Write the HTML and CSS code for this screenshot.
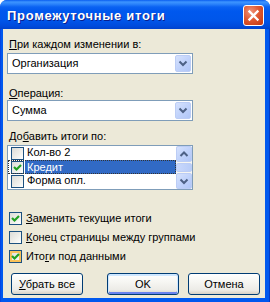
FILE: index.html
```html
<!DOCTYPE html>
<html lang="ru">
  <head>
    <meta charset="UTF-8" />
    <title>Промежуточные итоги</title>
    <link rel="stylesheet" href="styles.css">
  </head>
  <body>
    <div class="window">
      <div class="titlebar">
        <span class="title">Промежуточные итоги</span>
        <span class="close">
          <svg width="19" height="19" viewBox="0 0 19 19"><path d="M5.5 5.5 L13.5 13.5 M13.5 5.5 L5.5 13.5" stroke="#fff" stroke-width="2.4" stroke-linecap="square" fill="none"/></svg>
        </span>
      </div>
      <div class="frame">
        <div class="label label-first"><u>П</u>ри каждом изменении в:</div>
        <div class="combo combo-first">
          <span class="combo-text">Организация</span>
          <span class="arrow-btn"><svg width="14" height="15" viewBox="0 0 14 15"><polyline points="3.5,5.5 7,9 10.5,5.5" stroke="#4d6185" stroke-width="2" fill="none"/></svg></span>
        </div>
        <div class="label label-op"><u>О</u>перация:</div>
        <div class="combo">
          <span class="combo-text">Сумма</span>
          <span class="arrow-btn"><svg width="14" height="15" viewBox="0 0 14 15"><polyline points="3.5,5.5 7,9 10.5,5.5" stroke="#4d6185" stroke-width="2" fill="none"/></svg></span>
        </div>
        <div class="label label-add">До<u>б</u>авить итоги по:</div>
        <div class="listbox">
          <div class="items">
            <div class="item">
              <span class="cb"></span>
              <span class="item-text">Кол-во 2</span>
            </div>
            <div class="item focus">
              <span class="cb"><svg width="11" height="11" viewBox="0 0 11 11"><polyline points="2,5 4.5,7.5 9,3" stroke="#21a121" stroke-width="2.2" fill="none"/></svg></span>
              <span class="item-text selected">Кредит</span>
            </div>
            <div class="item">
              <span class="cb"></span>
              <span class="item-text">Форма опл.</span>
            </div>
          </div>
          <div class="scrollbar">
            <span class="arrow-btn sb-btn"><svg width="14" height="15" viewBox="0 0 14 15"><polyline points="3.5,9 7,5.5 10.5,9" stroke="#4d6185" stroke-width="2" fill="none"/></svg></span>
            <div class="track"><span class="thumb"></span></div>
            <span class="arrow-btn sb-btn"><svg width="14" height="15" viewBox="0 0 14 15"><polyline points="3.5,5.5 7,9 10.5,5.5" stroke="#4d6185" stroke-width="2" fill="none"/></svg></span>
          </div>
        </div>
        <div class="options">
          <div class="option">
            <span class="cb"><svg width="11" height="11" viewBox="0 0 11 11"><polyline points="2,5 4.5,7.5 9,3" stroke="#21a121" stroke-width="2.2" fill="none"/></svg></span>
            <span><u>З</u>аменить текущие итоги</span>
          </div>
          <div class="option">
            <span class="cb"></span>
            <span><u>К</u>онец страницы между группами</span>
          </div>
          <div class="option">
            <span class="cb hover"><svg width="11" height="11" viewBox="0 0 11 11"><polyline points="2,5 4.5,7.5 9,3" stroke="#21a121" stroke-width="2.2" fill="none"/></svg></span>
            <span>Ито<u>г</u>и под данными</span>
          </div>
        </div>
        <div class="buttons">
          <button class="btn"><span><u>У</u>брать все</span></button>
          <button class="btn btn-default">OK</button>
          <button class="btn">Отмена</button>
        </div>
      </div>
    </div>
  </body>
</html>
```

FILE: styles.css
```css
* {
  margin: 0;
  padding: 0;
  box-sizing: border-box;
}

body {
  width: 270px;
  height: 302px;
  overflow: hidden;
  font-family: "Liberation Sans", Arial, sans-serif;
  font-size: 11px;
  line-height: 13px;
  color: #000;
  background: #fff;
}

.window {
  width: 270px;
  height: 302px;
  display: flex;
  flex-direction: column;
  background: linear-gradient(90deg, #0831d9 0, #0058ee 1px, #0058ee 269px, #001ea0 270px);
  border-radius: 7px 7px 0 0;
  overflow: hidden;
}

.titlebar {
  height: 29px;
  flex: none;
  display: flex;
  align-items: center;
  justify-content: space-between;
  padding: 1px 6px 0 7px;
  background: linear-gradient(180deg, #0a5ef0 0, #3d95ff 2px, #2c84fb 4px, #0a62f2 7px, #0058ee 11px, #0056ea 20px, #004bdc 26px, #0042cc 29px);
}

.title {
  color: #fff;
  font-weight: bold;
  font-size: 13px;
  letter-spacing: 0.7px;
  text-shadow: 1px 1px 0 #0a1e8c;
}

.close {
  width: 21px;
  height: 21px;
  border: 1px solid #fff;
  border-radius: 3px;
  display: flex;
  align-items: center;
  justify-content: center;
  background: radial-gradient(circle at 35% 30%, #f0947a 0, #e05a33 45%, #c2350f 100%);
}

.frame {
  flex: 1;
  margin: 0 5px 4px 3px;
  padding-left: 4px;
  background: #ece9d8;
  display: flex;
  flex-direction: column;
  align-items: flex-start;
}

.label {
  padding-left: 2px;
}

.label-first {
  margin-top: 9px;
}

.label-op {
  margin-top: 13px;
}

.label-add {
  margin-top: 9px;
}

.combo {
  width: 186px;
  height: 21px;
  border: 1px solid #7f9db9;
  background: #fff;
  padding: 1px;
  display: flex;
  align-items: center;
}

.combo-first {
  margin-top: 2px;
}

.combo-text {
  flex: 1;
  padding-left: 3px;
}

.arrow-btn {
  width: 16px;
  height: 17px;
  flex: none;
  display: flex;
  align-items: center;
  justify-content: center;
  border: 1px solid #bccdf5;
  border-radius: 2px;
  background: linear-gradient(135deg, #d6e2fd 0, #c1d3fb 50%, #b0c6f7 100%);
}

.listbox {
  margin-top: 2px;
  width: 186px;
  height: 45px;
  border: 1px solid #7f9db9;
  background: #fff;
  display: flex;
}

.items {
  flex: 1;
  display: flex;
  flex-direction: column;
}

.item {
  height: 14px;
  display: flex;
  align-items: center;
  padding-left: 3px;
}

.item.focus {
  outline: 1px dotted #333;
  outline-offset: -1px;
}

.item-text {
  flex: 1;
  height: 14px;
  padding-left: 2px;
  margin-left: 1px;
}

.item-text.selected {
  background: #316ac5;
  color: #fff;
  border: 1px dotted #ce953a;
  border-left: none;
  line-height: 12px;
}

.cb {
  width: 13px;
  height: 13px;
  flex: none;
  display: flex;
  align-items: center;
  justify-content: center;
  border: 1px solid #1c5180;
  background: linear-gradient(135deg, #dcdcd7 0, #f0f0ec 60%, #fff 100%);
}

.cb.hover {
  box-shadow: inset 0 0 0 2px #f9c25a;
}

.scrollbar {
  width: 16px;
  flex: none;
  display: flex;
  flex-direction: column;
  background: #f7f6f1;
}

.sb-btn {
  height: 16px;
}

.track {
  flex: 1;
  padding: 1px 0;
  display: flex;
}

.thumb {
  flex: 1;
  border: 1px solid #bccdf5;
  border-radius: 2px;
  background: linear-gradient(90deg, #c9d8fc, #b8ccf8);
}

.options {
  margin-top: 22px;
  margin-left: 2px;
  display: flex;
  flex-direction: column;
  gap: 6px;
}

.option {
  height: 13px;
  display: flex;
  align-items: center;
  gap: 4px;
}

.buttons {
  margin-top: 10px;
  margin-left: 4px;
  display: flex;
}

.btn {
  width: 72px;
  height: 22px;
  font: inherit;
  color: #000;
  border: 1px solid #003c74;
  border-radius: 3px;
  background: linear-gradient(180deg, #fff 0, #f6f6f2 40%, #ecebe6 80%, #d6d0c5 100%);
}

.btn + .btn {
  margin-left: 9px;
}

.btn-default {
  margin-left: 24px !important;
  box-shadow: inset 0 1px 0 1px #cee7ff, inset 0 -1px 0 1px #6982ee;
}
```
